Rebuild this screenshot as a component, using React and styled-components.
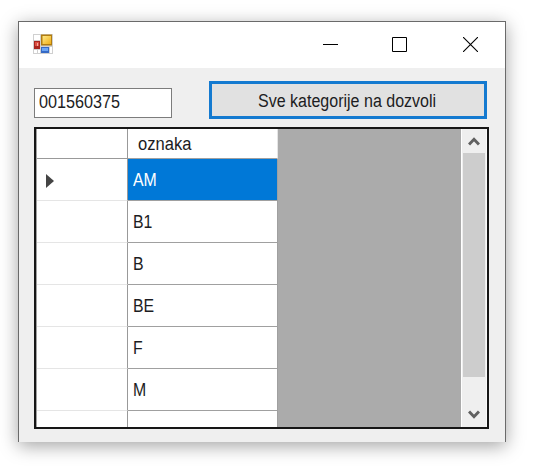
import React from "react";
import styled, { createGlobalStyle } from "styled-components";

const GlobalStyle = createGlobalStyle`
  *, *::before, *::after { box-sizing: border-box; }
  html, body { margin: 0; background: #fff; overflow: hidden; }
  body { font-family: "Liberation Sans", Arial, sans-serif; color: #1c1c22; }
`;

const Desktop = styled.main`
  width: 536px;
  height: 466px;
  padding: 21px 0 0 18px;
  background: #fff;
  overflow: hidden;
`;

const Window = styled.section`
  width: 488px;
  height: 421px;
  display: flex;
  flex-direction: column;
  border: 1px solid #6a6a6a;
  border-bottom: 0;
  background: #efefef;
  box-shadow: 0 4px 17px rgba(0, 0, 0, 0.36);
`;

const TitleBar = styled.header`
  height: 46px;
  flex: none;
  display: flex;
  align-items: flex-start;
  padding: 11px 0 0 13px;
  background: #fff;
`;

const Controls = styled.div`
  display: grid;
  grid-template-columns: 69px 71px 15px;
  margin: 4px 27px 0 auto;
  svg { display: block; }
`;

const Body = styled.div`
  display: flex;
  flex-direction: column;
  padding: 13px 17px 0 15px;
`;

const FormRow = styled.div`
  display: flex;
  align-items: flex-start;
  height: 46px;
`;

const Label = styled.span`
  display: inline-block;
  flex: none;
  font-size: 18px;
  line-height: 20px;
  white-space: pre;
  transform: scaleX(${(p) => p.$scale || 0.88});
  transform-origin: ${(p) => (p.$center ? "center" : "left")};
`;

const TextField = styled.div`
  width: 138px;
  height: 30px;
  margin: 7px 37px 0 0;
  padding: 3px 0 0 4px;
  border: 1px solid #7c7c7c;
  background: #fff;
  line-height: 0;
`;

const Button = styled.button`
  width: 278px;
  height: 38px;
  padding: 2px 2px 0 0;
  display: flex;
  align-items: center;
  justify-content: center;
  border: 3px solid #147ad0;
  border-radius: 0;
  background: #e1e1e1;
  color: #1c1c22;
  font-family: inherit;
`;

const DataGrid = styled.div`
  width: 455px;
  height: 302px;
  display: flex;
  border: 2px solid #161616;
  background: #ababab;
  overflow: hidden;
`;

const Table = styled.div`
  width: 242px;
  border-left: 1px solid #a0a0a0;
  flex: none;
`;

const Row = styled.div`
  display: grid;
  grid-template-columns: 91px 150px;
  height: ${(p) => (p.$header ? "30px" : "42px")};
`;

const RowHeader = styled.div`
  display: flex;
  align-items: center;
  padding-left: 9px;
  padding-top: 2px;
  border-right: 1px solid #999;
  border-bottom: 1px solid ${(p) => (p.$header ? "#999" : "#e5e5e5")};
  background: #fff;
`;

const Cell = styled.div`
  display: flex;
  align-items: center;
  padding-left: ${(p) => (p.$header ? "10px" : "5px")};
  padding-top: 1px;
  border-right: 1px solid ${(p) => (p.$header ? "#e5e5e5" : "#a0a0a0")};
  border-bottom: 1px solid #a0a0a0;
  background: ${(p) => (p.$selected ? "#0078d7" : "#fff")};
  color: ${(p) => (p.$selected ? "#fff" : "#1c1c22")};
`;

const ScrollBar = styled.div`
  width: 26px;
  margin-left: auto;
  display: flex;
  flex-direction: column;
  border-left: 1px solid #fff;
  border-right: 1px solid #fafafa;
  background: #efefef;
`;

const Arrow = styled.div`
  height: 24px;
  flex: none;
  display: flex;
  align-items: center;
  justify-content: center;
  margin-top: ${(p) => (p.$end ? "auto" : "0")};
`;

const Thumb = styled.div`
  height: 224px;
  margin: 0 1px;
  background: #cdcdcd;
`;

const AppIcon = () => (
  <svg width="22" height="22" viewBox="0 0 22 22">
    <defs>
      <linearGradient id="gold" x1="0" y1="0" x2="1" y2="1">
        <stop stopColor="#ffe987" /><stop offset="1" stopColor="#efae16" />
      </linearGradient>
    </defs>
    <path fill="#d0d0d0" d="M1 1h20v20H1z" />
    <path fill="#fff" d="M2 2h6v5H2zM2 17h3v3H2zM6 17h2v3H6zM18 14h2v6h-2z" />
    <path fill="#a92620" d="M2 8h6v8H2z" />
    <path fill="#dc5144" d="M3 9h4v4H3z" />
    <path fill="#f5aaa0" d="M5 10h1v3H5z" />
    <path fill="#b17c10" d="M9 1.5H20v11H9z" />
    <path fill="url(#gold)" d="M10.5 3H19v8h-8.5z" />
    <path fill="#3569c5" d="M9 14h8v6H9z" />
    <path fill="#6ba5f5" d="M10 15h6v3h-6z" />
  </svg>
);

const Chevron = ({ down }) => (
  <svg width="12" height="10" viewBox="0 0 12 10">
    <path d={down ? "M1 1.5L6 6.7L11 1.5" : "M1 8.5L6 3.3L11 8.5"} fill="none" stroke="#606060" strokeWidth="3" />
  </svg>
);

const categories = ["AM", "B1", "B", "BE", "F", "M", ""];

export default function App() {
  return (
    <Desktop>
      <GlobalStyle />
      <Window>
        <TitleBar>
          <AppIcon />
          <Controls>
            <svg width="15" height="15"><path d="M0 7.5h15" stroke="#000" /></svg>
            <svg width="15" height="15"><path d="M.5 .5h14v14H.5z" fill="none" stroke="#000" /></svg>
            <svg width="15" height="15"><path d="M0 0l15 15M15 0L0 15" stroke="#000" strokeWidth="1.1" /></svg>
          </Controls>
        </TitleBar>
        <Body>
          <FormRow>
            <TextField><Label $scale={0.9}>001560375</Label></TextField>
            <Button><Label $center $scale={0.89}>Sve kategorije na dozvoli</Label></Button>
          </FormRow>
          <DataGrid>
            <Table>
              <Row $header>
                <RowHeader $header />
                <Cell $header><Label $scale={0.92}>oznaka</Label></Cell>
              </Row>
              {categories.map((name, i) => (
                <Row key={i}>
                  <RowHeader>
                    {i === 0 && <svg width="9" height="14"><path d="M0 0l8 7l-8 7z" fill="#444" /></svg>}
                  </RowHeader>
                  <Cell $selected={i === 0}><Label>{name}</Label></Cell>
                </Row>
              ))}
            </Table>
            <ScrollBar>
              <Arrow><Chevron /></Arrow>
              <Thumb />
              <Arrow $end><Chevron down /></Arrow>
            </ScrollBar>
          </DataGrid>
        </Body>
      </Window>
    </Desktop>
  );
}
